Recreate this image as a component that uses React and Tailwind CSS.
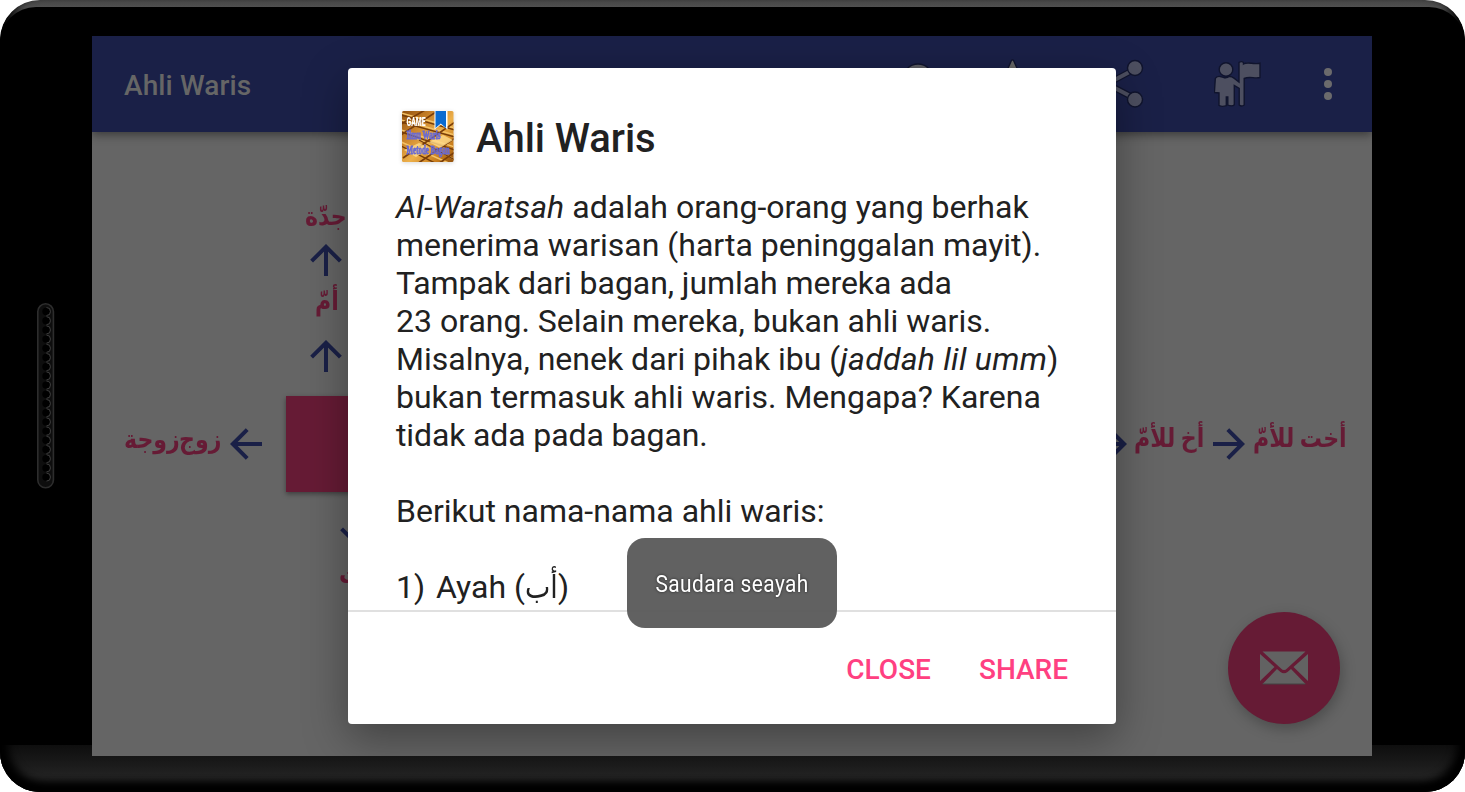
import { clsx } from 'clsx';

const labels = [
  { text: 'جدّة', className: 'left-[213px] top-[67px]' },
  { text: 'أمّ', className: 'left-[223px] top-[152px] scale-x-[0.8]' },
  { text: 'زوج', className: 'left-[87px] top-[290px]' },
  { text: 'زوجة', className: 'left-[32px] top-[290px]' },
  { text: 'بنت', className: 'left-[247px] top-[425px]' },
  { text: 'أخ للأمّ', className: 'left-[1042px] top-[289px]' },
  { text: 'أخت للأمّ', className: 'left-[1161px] top-[289px]' },
];

const arrows = [
  'left-[218px] top-[108px]',
  'left-[218px] top-[204px]',
  'left-[138px] top-[292px] -rotate-90',
  'left-[248px] top-[378px] rotate-180',
  'left-[1003px] top-[292px] rotate-90',
  'left-[1121px] top-[292px] rotate-90',
];

const holes = Array.from({ length: 19 }, (_, i) => 8.5 + i * 9.2);

function Speaker() {
  return (
    <svg className="h-[186px] w-[18px] shrink-0" viewBox="0 0 18 186">
      <rect x="0.8" y="0.8" width="15.6" height="184" rx="7.8" fill="#0e0e0e" stroke="#2d2d2d" strokeWidth="1.6" />
      {holes.map((y) => (
        <g key={y}>
          <circle cx="9" cy={y} r="3.7" fill="#000" />
          <path d={`M9.5 ${y - 4}a4 4 0 0 1 0 8`} fill="none" stroke="#424242" strokeWidth="0.9" />
        </g>
      ))}
    </svg>
  );
}

function Arrow({ className }) {
  return (
    <svg className={clsx('absolute h-8 w-8', className)} viewBox="0 0 32 32" fill="none" stroke="#1a2047" strokeWidth="4">
      <path d="M16 32V3M1.6 17.2 16 2.8l14.4 14.4" />
    </svg>
  );
}

function ActionIcon({ children }) {
  return (
    <svg className="h-16 w-16 shrink-0" viewBox="0 0 64 64" fill="#4d4f60" stroke="#10142d" strokeWidth="1.4">
      {children}
    </svg>
  );
}

function AppBar() {
  return (
    <header className="relative flex h-24 items-center justify-between bg-[#1a2047] pl-8 shadow-[0_3px_9px_rgba(0,0,0,0.42)]">
      <h1 className="pt-[3px] text-[28px] font-medium tracking-[0.12px] text-[#666]">Ahli Waris</h1>
      <div className="flex items-center gap-[45px] pr-[30px]">
        <ActionIcon>
          <path d="m40 40 13 13" stroke="#5c5d63" strokeWidth="7" />
          <circle cx="31" cy="27" r="15" fill="#5c5d63" />
        </ActionIcon>
        <ActionIcon>
          <path d="M15.200 9q1.300-2.200 2.600 0l6.200 14 16.500 1.500-12.500 11 4 16.500-15.500-9-15.500 9 4-16.500-12.500-11L9 23z" fill="#666" />
        </ActionIcon>
        <ActionIcon>
          <path d="M31 16.500 2 32l29 15" fill="none" stroke="#10142d" strokeWidth="6.500" />
          <path d="M31 16.500 2 32l29 15" fill="none" stroke="#4d4f60" strokeWidth="4" />
          <circle cx="30" cy="16" r="7.500" />
          <circle cx="30" cy="47.500" r="7.500" />
        </ActionIcon>
        <ActionIcon>
          <circle cx="12" cy="17.500" r="6.800" />
          <path d="M25 10.500q2.500-1.800 4.500 0v1.500c5-3 9 1 16.500-.8v14.300c-5.500 1.500-10-1.600-15.800 1V53q-2.600 2-5 0V36.500l-4.900-3v19.200q-1.800 2-6.500.5V45h-1.500v8.700q-4.500 1.500-7.300-.3V41l-4.600-.5.900-14q1.200-2.600 5-2l3 .8q3 1.200 6-.8 2.300-.2 4.700 1.600l5 3.900z" />
        </ActionIcon>
        <svg className="-ml-[9px] h-9 w-7" viewBox="0 0 28 36" fill="#6b6a6c">
          <circle cx="14" cy="6" r="4" />
          <circle cx="14" cy="18" r="4" />
          <circle cx="14" cy="30" r="4" />
        </svg>
      </div>
    </header>
  );
}

function GameLogo() {
  return (
    <svg className="h-[54px] w-[54px] shrink-0 overflow-visible drop-shadow-sm" viewBox="0 0 54 54">
      <defs>
        <linearGradient id="gold" x1="0" y1="0" x2="1" y2="1">
          <stop offset="0" stopColor="#8c4d0d" />
          <stop offset="0.3" stopColor="#c9822a" />
          <stop offset="0.55" stopColor="#edb04a" />
          <stop offset="0.8" stopColor="#c77c1c" />
          <stop offset="1" stopColor="#87480a" />
        </linearGradient>
        <clipPath id="tile">
          <rect x="1" y="1" width="51.500" height="51" rx="1.500" />
        </clipPath>
      </defs>
      <g clipPath="url(#tile)">
        <rect width="54" height="54" fill="url(#gold)" />
        <path d="M0 10 54 25M0 3l54 15M0 20l54 17M0 32l50 22M10 25l44 25" stroke="#f4c368" strokeWidth="1.500" />
        <path d="M0 12 54 27M0 5l54 15M0 22l54 18M0 36l36 18M18 30l36 20" stroke="#753c08" strokeWidth="1.400" />
        <path d="M38 0 0 25M54 12 2 48M54 28 16 54M24 0 0 14M54 42 37 54" stroke="#7a3d08" strokeWidth="1.700" />
        <path d="M3 40 18 33l11 5-14 9zM28 32l14-7 10 5-13 8z" fill="#ffdc8c" fillOpacity="0.8" />
      </g>
      <path d="M33.500 1h13v18.500l-6.500-5-6.500 5z" fill="#fff" />
      <path d="M34.500 1h10.500v17l-5.200-4.500-5.300 4.500z" fill="#0b6bd0" />
      <text x="5.500" y="15.500" fontFamily="Roboto" fontSize="12" fontWeight="900" fill="#fff" textLength="19" lengthAdjust="spacingAndGlyphs">GAME</text>
      <text x="5.500" y="28.800" fontFamily="Liberation Serif" fontSize="12" fontWeight="700" fill="#6769d6" stroke="#6769d6" strokeWidth="0.800" textLength="34" lengthAdjust="spacingAndGlyphs">Ilmu Waris</text>
      <text x="5.500" y="43.800" fontFamily="Liberation Serif" fontSize="12" fontWeight="700" fill="#6769d6" stroke="#6769d6" strokeWidth="0.800" textLength="43" lengthAdjust="spacingAndGlyphs">Metode Bagan</text>
    </svg>
  );
}

function HeirDialog() {
  return (
    <section className="absolute left-64 top-8 flex h-[656px] w-[768px] flex-col overflow-hidden rounded bg-white text-[#212121]">
      <div className="flex h-[542px] flex-col px-12 pt-[42px]">
        <div className="flex items-start gap-[21px] pl-[5px]">
          <GameLogo />
          <h2 className="pt-0.5 text-[40px] leading-[54px] font-medium tracking-[-0.05px] whitespace-nowrap">Ahli Waris</h2>
        </div>
        <div className="mt-[22px] text-[32px] leading-[38px] whitespace-nowrap">
          <p><i className="tracking-[0.1px]">Al-Waratsah</i> adalah orang-orang yang berhak</p>
          <p>menerima warisan (harta peninggalan mayit).</p>
          <p className="tracking-[-0.06px]">Tampak dari bagan, jumlah mereka ada</p>
          <p>23 orang. Selain mereka, bukan ahli waris.</p>
          <p>Misalnya, nenek dari pihak ibu (<i className="tracking-[0.26px]">jaddah lil umm</i>)</p>
          <p>bukan termasuk ahli waris. Mengapa? Karena</p>
          <p className="tracking-[-0.13px]">tidak ada pada bagan.</p>
          <p className="mt-[38px]">Berikut nama-nama ahli waris:</p>
          <p className="mt-[38px] flex">
            <span className="w-10">1)</span>Ayah (
            <span lang="ar" dir="rtl" className="-mr-[6px] origin-left scale-x-[0.84]">أب</span>)
          </p>
        </div>
      </div>
      <footer className="flex grow items-start justify-end gap-12 border-t-2 border-[#e0e0e0] px-12 pt-[38px] text-[28px] font-medium text-[#ff4081]">
        <button className="leading-10">CLOSE</button>
        <button className="leading-10">SHARE</button>
      </footer>
    </section>
  );
}

export default function App() {
  return (
    <div className="h-[792px] w-[1465px] overflow-hidden bg-white font-['Roboto','DejaVu_Sans',sans-serif]">
      <div className="relative h-full overflow-hidden rounded-[40px] bg-linear-to-b from-[#444] via-[#505050] via-[7px] to-black to-[42px]">
        {/* black face of the phone, leaving the lit rim along the top */}
        <div className="absolute inset-x-0 top-[7px] bottom-0 rounded-t-[36px] bg-black" />
        <div className="absolute inset-x-0 bottom-0 h-[47px] bg-linear-to-b from-[#0e0e0e] via-[#222] via-65% to-[#202020]" />
        <div className="absolute inset-0 rounded-[40px] shadow-[inset_8px_-8px_8px_#000,inset_-8px_-8px_8px_#000]" />
        <div className="relative flex pt-9">
          <div className="flex h-[720px] w-[92px] shrink-0 items-start pt-[267px] pl-[37px]">
            <Speaker />
          </div>
          <main className="relative h-[720px] w-[1280px] overflow-hidden bg-[#656565]">
            <AppBar />
            <div className="absolute left-[194px] top-[360px] h-24 w-24 bg-[#661b35] shadow-[0_2px_5px_rgba(0,0,0,0.4)]" />
            {arrows.map((pos) => <Arrow key={pos} className={clsx(pos, 'mt-[100px]')} />)}
            {labels.map((l) => (
              <span key={l.text} dir="rtl" className={clsx('absolute mt-[90px] origin-left scale-x-[0.85] text-[26px] leading-[46px] font-bold whitespace-nowrap text-[#661b35]', l.className)}>
                {l.text}
              </span>
            ))}
            <button className="absolute right-8 bottom-8 flex size-28 items-center justify-center rounded-full bg-[#661b35] shadow-[2px_5px_14px_rgba(0,0,0,0.25)]">
              <svg className="h-[34px] w-12" viewBox="0 0 48 34">
                <path d="M2.500.5h43L27 17.500q-3 3-6 0zM0 3l14.500 13L0 30zM48 3 33.500 16 48 30zM2.500 33 17 18l3.500 3q3.500 2.500 7 0l3.500-3 14.500 15z" fill="#626262" />
                <path d="M2.500 33h43" stroke="#424242" />
              </svg>
            </button>
            <div className="absolute left-64 top-8 h-[656px] w-[768px] rounded shadow-[0_14px_44px_rgba(0,0,0,0.36)]" />
            <HeirDialog />
            <div className="absolute left-[535px] top-[502px] flex h-[90px] w-[210px] items-center justify-center rounded-[18px] bg-[#595959]/95 pt-0.5">
              <span className="scale-x-[0.87] text-2xl tracking-[0.5px] whitespace-nowrap text-white [text-shadow:0_0_3px_rgba(0,0,0,0.7)]">Saudara seayah</span>
            </div>
          </main>
        </div>
      </div>
    </div>
  );
}
